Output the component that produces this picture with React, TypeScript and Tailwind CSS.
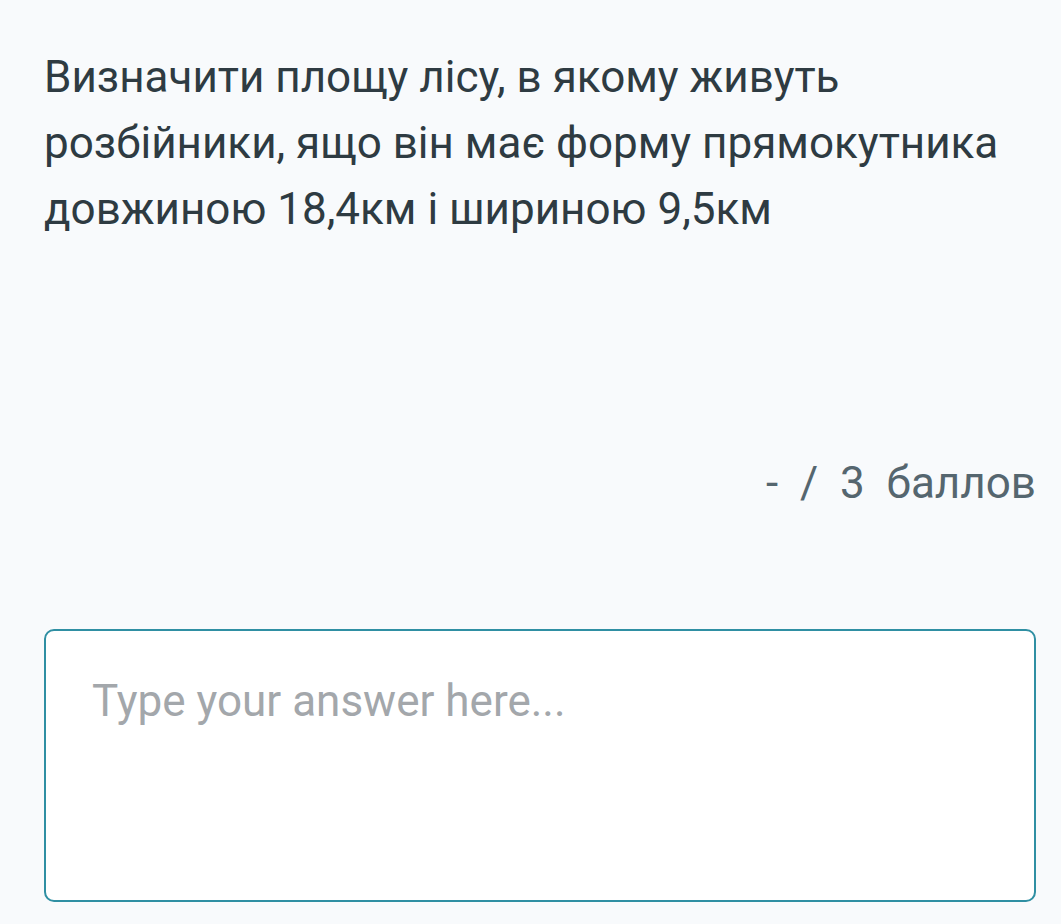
export default function App() {
  return (
    <div
      className="min-h-screen bg-[#f8fafc] pt-[44px] pl-[44px] pr-[25px]"
      style={{ fontFamily: "Roboto, 'Noto Sans', sans-serif" }}
    >
      <p className="text-[44px] leading-[66px] text-[#2e3b42]">
        Визначити площу лісу, в якому живуть розбійники, ящо він має форму
        прямокутника довжиною 18,4км і шириною 9,5км
      </p>

      <div className="mt-[208px] flex justify-end">
        <span className="whitespace-pre text-[44px] leading-[66px] text-[#55666f]">
          {"-  /  3  баллов"}
        </span>
      </div>

      <textarea
        className="mt-[113px] block h-[273px] w-full resize-none rounded-[10px] border-2 border-[#2f8fa3] bg-white px-[46px] pt-[37px] text-[44px] leading-[66px] text-[#2e3b42] outline-none placeholder:text-[#a3a7ab]"
        placeholder="Type your answer here..."
      />
    </div>
  );
}
